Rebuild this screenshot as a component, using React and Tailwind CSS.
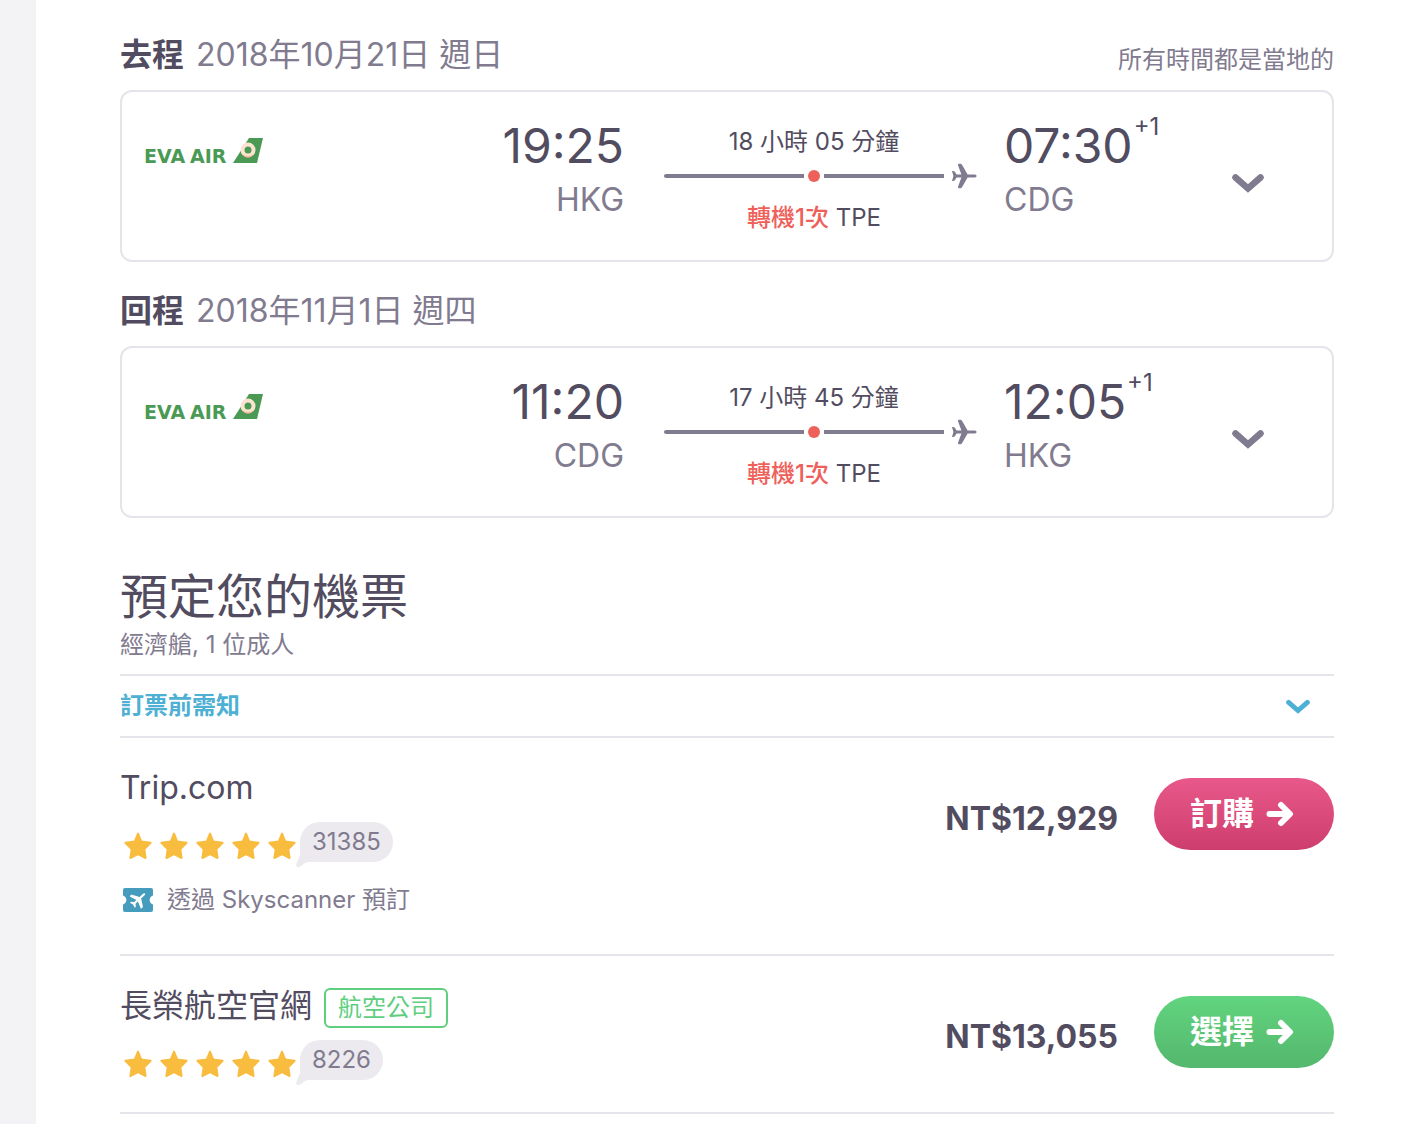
const flights = [
  {
    id: "outbound",
    label: "去程",
    date: "2018年10月21日 週日",
    note: "所有時間都是當地的",
    depart: "19:25",
    from: "HKG",
    arrive: "07:30",
    to: "CDG",
    duration: "18 小時 05 分鐘",
  },
  {
    id: "return",
    label: "回程",
    date: "2018年11月1日 週四",
    depart: "11:20",
    from: "CDG",
    arrive: "12:05",
    to: "HKG",
    duration: "17 小時 45 分鐘",
  },
];

const PLANE =
  "M10.4 11.4 7 2.200Q6.700.800 8 .800h1.400q1 0 1.600 1L16.600 11.400h7.300q1.700.400 1.700 1.600t-1.700 1.600h-7.300L11 24.200q-.6 1-1.600 1H8Q6.700 25.200 7 23.800l3.400-9.200H5.600L4 17q-.7 1-1.700 1H1l1.400-5L1 8h1.300Q3.300 8 4 9l1.600 2.400z";

function PlaneIcon() {
  return (
    <svg width="26" height="26" viewBox="0 0 26 26" aria-hidden="true">
      <path d={PLANE} fill="#817b8f" />
    </svg>
  );
}

function ChevronIcon({ className }) {
  return (
    <svg className={className} viewBox="0 0 32 20" fill="none" aria-hidden="true">
      <path d="M3.5 4.500 16 15.500 28.5 4.500" stroke="currentColor" strokeWidth="6.500" strokeLinecap="round" />
    </svg>
  );
}

function ArrowIcon() {
  return (
    <svg width="28" height="26" viewBox="0 0 28 26" fill="none" aria-hidden="true">
      <path
        d="M3.5 13H22M15 4l9 9-9 9"
        stroke="currentColor"
        strokeWidth="6"
        strokeLinecap="round"
        strokeLinejoin="round"
      />
    </svg>
  );
}

function StarIcon() {
  return (
    <svg width="28" height="28" viewBox="0 0 28 28" aria-hidden="true">
      <path
        d="M14 1.600 17.300 9.600 26.600 10.700 20.300 17.200 21.600 26 14 22.200 6.400 26 7.700 17.200 1.400 10.700 10.700 9.600z"
        fill="#f8bc3f"
        stroke="#f8bc3f"
        strokeWidth="2"
        strokeLinejoin="round"
      />
    </svg>
  );
}

function TicketIcon() {
  return (
    <svg width="30" height="24" viewBox="0 0 30 24" aria-hidden="true">
      <path
        d="M2 0h26a2 2 0 0 1 2 2v5.5a4.700 4.700 0 0 0 0 9V22a2 2 0 0 1-2 2H2a2 2 0 0 1-2-2v-5.500a4.700 4.700 0 0 0 0-9V2a2 2 0 0 1 2-2z"
        fill="#459cbd"
      />
      <path d={PLANE} fill="#fff" transform="translate(15.500 11.500) rotate(-43) scale(.7) translate(-13 -13)" />
    </svg>
  );
}

function EvaLogo() {
  return (
    <svg width="120" height="40" viewBox="0 0 120 40" role="img" aria-label="EVA AIR">
      <g fill="#4a9a55" fontFamily="DejaVu Sans, sans-serif" fontWeight="700" fontSize="19">
        <text x="0" y="27">EVA</text>
        <text x="46" y="27">AIR</text>
      </g>
      <path d="M105 2h14l-6 25H89z" fill="#4a9a55" />
      <circle cx="104" cy="14" r="5.500" fill="none" stroke="#fbe3d0" strokeWidth="4" />
      <path d="M108.500 19.500a7 7 0 0 1-9 0" fill="none" stroke="#e59a7c" strokeWidth="1" />
      <circle cx="104" cy="14" r="2.500" fill="#4a9a55" />
    </svg>
  );
}

function FlightLeg({ flight }) {
  return (
    <section className="mt-6 first:mt-0">
      <div className="mb-[10px] flex items-end justify-between">
        <h3 className="flex gap-3 text-[32px] leading-[50px]">
          <span className="font-bold text-[#524c61]">{flight.label}</span>
          <span className="text-[#817b8f]">{flight.date}</span>
        </h3>
        {flight.note && <p className="text-2xl leading-[40px]">{flight.note}</p>}
      </div>

      <div className="flex items-start rounded-xl border-2 border-[#e5e4ea] py-6 pr-[68px] pl-[22px]">
        <div className="pt-5">
          <EvaLogo />
        </div>

        <div className="flex-1 text-right">
          <p className="text-5xl leading-[60px] text-[#524c61]">{flight.depart}</p>
          <p className="text-[32px] leading-[48px]">{flight.from}</p>
        </div>

        <div className="ml-10 w-[314px] pt-2 text-2xl leading-[36px] text-[#524c61]">
          <p className="w-[300px] text-center">{flight.duration}</p>
          <div className="flex h-8 items-center">
            <span className="h-1 w-[140px] rounded-l-full bg-[#817b8f]" />
            <span className="mx-1 size-3 rounded-full bg-[#ee615b]" />
            <span className="mr-[7px] h-1 w-[120px] bg-[#817b8f]" />
            <PlaneIcon />
          </div>
          <p className="mt-2 w-[300px] text-center">
            <span className="font-medium text-[#ee615b]">轉機1次</span> TPE
          </p>
        </div>

        <div className="ml-[26px] w-[228px]">
          <p className="flex text-5xl leading-[60px] text-[#524c61]">
            {flight.arrive}
            <sup className="top-0 ml-px text-2xl leading-[22px]">+1</sup>
          </p>
          <p className="text-[32px] leading-[48px]">{flight.to}</p>
        </div>

        <button type="button" aria-label="航班詳情" className="mt-[57px]">
          <ChevronIcon className="h-5 w-8" />
        </button>
      </div>
    </section>
  );
}

function Reviews({ count }) {
  return (
    <div className="mt-[10px] flex h-10 items-center">
      <div className="flex gap-2 pt-2 pl-1">
        {[0, 1, 2, 3, 4].map((n) => (
          <StarIcon key={n} />
        ))}
      </div>
      <span className="relative ml-1 h-10 rounded-[20px] bg-[#eceaef] px-3 text-2xl leading-10">
        <svg
          className="absolute top-5 -left-1"
          width="20"
          height="26"
          viewBox="0 0 20 26"
          aria-hidden="true"
        >
          <path d="M4 0v13L.4 22c-.8 2.500 1.800 4.400 4.100 2.600L9.500 20.800q1-.8 3-.8H20z" fill="#eceaef" />
        </svg>
        <span className="relative">{count}</span>
      </span>
    </div>
  );
}

function Offer({ name, badge, reviews, via, price, action, buttonClass }) {
  return (
    <li className="flex items-start border-b-2 border-[#e5e4ea] pb-8">
      <div className="flex-1 pt-[26px]">
        <h3 className="flex items-center gap-3 text-[32px] leading-[48px] text-[#524c61]">
          {name}
          {badge && (
            <span className="mt-1 rounded-md border-2 border-[#5fcf7f] px-3 text-2xl leading-[36px] text-[#5fcf7f]">
              {badge}
            </span>
          )}
        </h3>
        <Reviews count={reviews} />
        {via && (
          <p className="mt-4 flex h-11 items-center gap-[14px] pl-[3px] text-2xl">
            <TicketIcon />
            {via}
          </p>
        )}
      </div>
      <p className="mt-14 mr-9 text-[32px] leading-[50px] font-bold text-[#524c61]">{price}</p>
      <button
        type="button"
        className={`mt-10 flex h-[72px] w-[180px] items-center justify-center gap-3 rounded-full pr-1 text-[32px] font-bold text-white ${buttonClass}`}
      >
        {action}
        <ArrowIcon />
      </button>
    </li>
  );
}

export default function App() {
  return (
    <div className="flex min-h-screen bg-[#f3f3f6] pl-9 font-['Inter','Noto_Sans_CJK_TC',sans-serif] text-[#817b8f]">
      <main className="flex-1 bg-white pt-[30px] pr-[68px] pl-[84px]">
        {flights.map((flight) => (
          <FlightLeg key={flight.id} flight={flight} />
        ))}

        <section className="mt-12">
          <h2 className="text-5xl leading-[62px] text-[#524c61]">預定您的機票</h2>
          <p className="text-2xl leading-[34px]">經濟艙, 1 位成人</p>

          <button
            type="button"
            className="mt-3 flex h-16 w-full items-center justify-between border-y-2 border-[#e5e4ea] pr-6 text-2xl font-bold text-[#4eb0d4]"
          >
            訂票前需知
            <ChevronIcon className="h-[15px] w-6" />
          </button>

          <ul>
            <Offer
              name="Trip.com"
              reviews="31385"
              via="透過 Skyscanner 預訂"
              price="NT$12,929"
              action="訂購"
              buttonClass="bg-linear-to-b from-[#e8588a] to-[#cd3d6d]"
            />
            <Offer
              name="長榮航空官網"
              badge="航空公司"
              reviews="8226"
              price="NT$13,055"
              action="選擇"
              buttonClass="bg-linear-to-b from-[#62d47f] to-[#54b76d]"
            />
          </ul>
        </section>
      </main>
    </div>
  );
}
